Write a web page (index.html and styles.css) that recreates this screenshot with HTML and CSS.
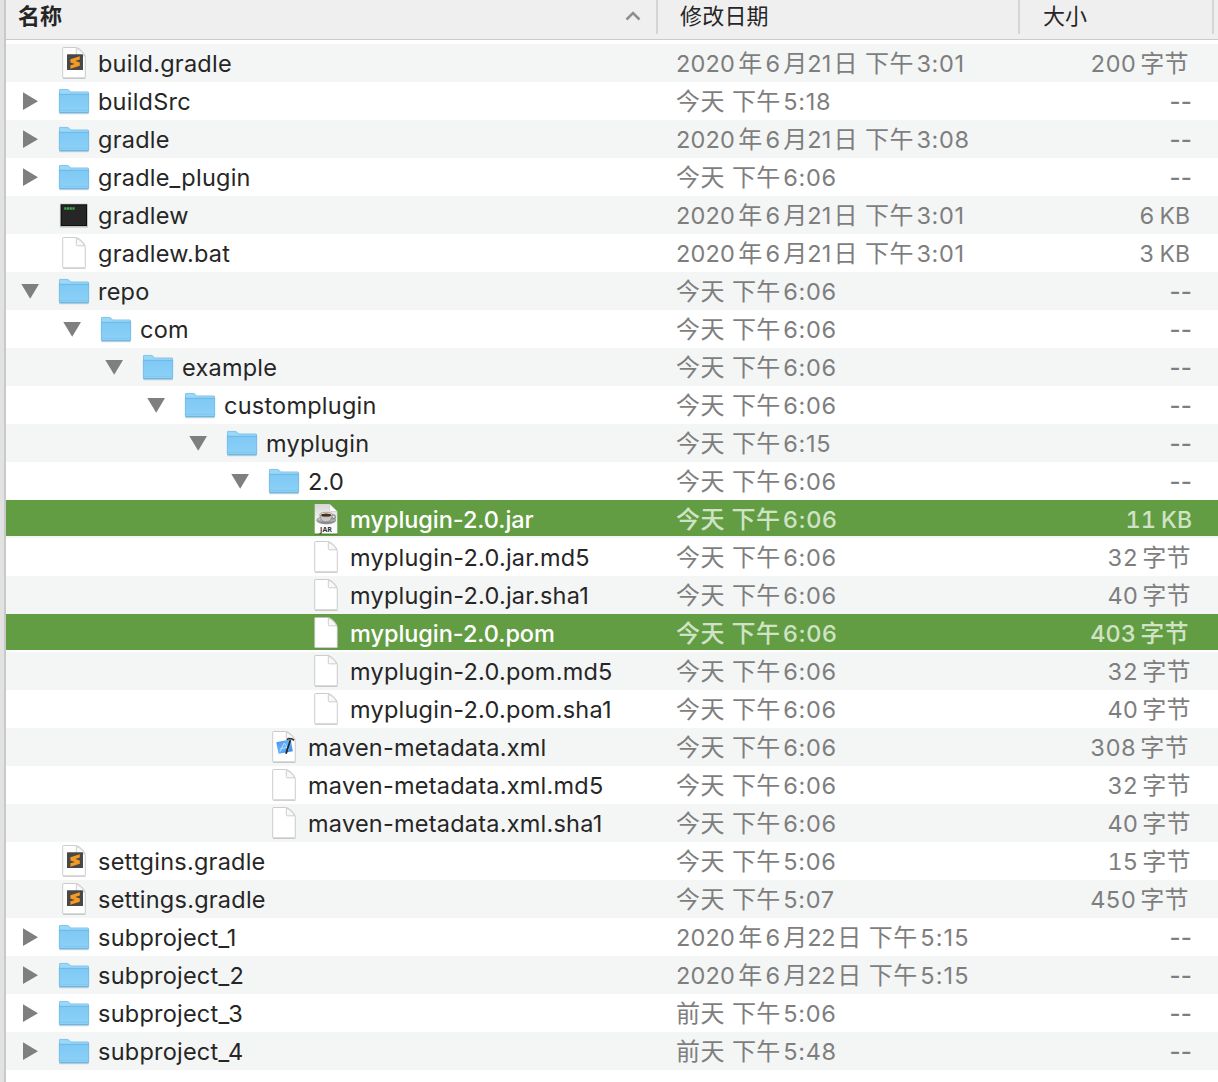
FILE: index.html
```html
<!DOCTYPE html>
<html lang="zh-CN">
<head>
<meta charset="utf-8">
<title>Finder</title>
<link rel="stylesheet" href="styles.css">
</head>
<body>
<svg class="defs" width="0" height="0" aria-hidden="true">
  <defs>
    <linearGradient id="front" x1="0" y1="0" x2="0" y2="1"><stop offset="0" stop-color="#7ec9f4"/><stop offset="1" stop-color="#8dd1f8"/></linearGradient>
    <linearGradient id="saucer" x1="0" y1="0" x2="0" y2="1"><stop offset="0" stop-color="#f4f4f4"/><stop offset="1" stop-color="#777"/></linearGradient>
    <linearGradient id="sheet" x1="0" y1="0" x2="0" y2="1"><stop offset="0" stop-color="#d6d6d6"/><stop offset=".6" stop-color="#f6f6f6"/><stop offset="1" stop-color="#fff"/></linearGradient>
    <linearGradient id="blue" x1="0" y1="0" x2="1" y2="1"><stop offset="0" stop-color="#3f8eea"/><stop offset=".5" stop-color="#69b4fa"/><stop offset="1" stop-color="#2f7fe0"/></linearGradient>
  </defs>
  <symbol id="right" viewBox="0 0 18 38"><path d="M2 10.300v17.700l15-8.800z" fill="#7f7f7f"/></symbol>
  <symbol id="down" viewBox="0 0 18 38"><path d="M.3 12h17.700l-8.800 14.700z" fill="#7f7f7f"/></symbol>
  <symbol id="folder" viewBox="0 0 32 38">
    <path d="M1.5 31.8h29" stroke="#000" stroke-opacity=".14"/>
    <path d="M1 8.2Q1 7 2.2 7h7.2q.8 0 1.3.6l1.3 1.5q.5.6 1.3.6h16.5q1.2 0 1.2 1.2V20H1z" fill="#9ad8fa"/>
    <path d="M1.5 12V8.2q0-.8.8-.8h7.1q.7 0 1.1.5l1.4 1.6q.4.5 1.3.5h16.6q.7 0 .7.8V12" fill="none" stroke="#79bbe0" stroke-width=".7"/>
    <path d="M1 12h30v18.2q0 1-1 1H2q-1 0-1-1z" fill="url(#front)"/>
    <path d="M1 12.3h30" stroke="#67b2e0" stroke-width=".8"/>
    <path d="M1.3 12v18M30.7 12v18" stroke="#6db4df" stroke-width=".6"/>
    <path d="M1.3 28.3h29.4" stroke="#79c2ec" stroke-width=".6"/>
    <path d="M1.4 30.8h29.2" stroke="#62a5cd" stroke-width=".9"/>
  </symbol>
  <symbol id="file" viewBox="0 0 32 38">
    <path d="M5 34.4h22.5" stroke="#000" stroke-opacity=".18"/>
    <path d="M5.4 3.5h12.1c3.6 0 9.8 6 9.8 10v19.7q0 .6-.6.6H5.4q-.7 0-.7-.7V4.2q0-.7.7-.7z" fill="#fff" stroke="#bfbfbf" stroke-width=".8"/>
    <path d="M18.3 4.2v6.600q0 1 1 1h7.400c-1.500-3.200-4.900-6.300-8.400-7.600z" fill="#f8f8f8" stroke="#c4c4c4" stroke-width=".8"/>
  </symbol>
  <symbol id="sublime" viewBox="0 0 32 38">
    <use href="#file" width="32" height="38"/>
    <rect x="9" y="10.300" width="16" height="15.800" rx=".6" fill="#484848"/>
    <path d="M21.800 12.300l-9.400 2.900v3.300l4.500 1.400-4.500 1.400v3.400l9.400-2.900v-3.400l-4.500-1.400 4.500-1.400z" fill="#f79a24"/>
  </symbol>
  <symbol id="exec" viewBox="0 0 32 38">
    <rect x="1.800" y="8.300" width="28.200" height="23.400" rx=".6" fill="#000" fill-opacity=".16"/>
    <rect x="2" y="7.700" width="27.700" height="23" fill="#b8c1c1"/>
    <rect x="2.700" y="8.300" width="26.300" height="21.700" fill="#101010"/>
    <rect x="3.700" y="9.300" width="24.300" height="19.700" fill="#262626"/>
    <path d="M6.300 12.500h10.400" stroke="#43a647" stroke-width="2.400" stroke-dasharray="2.200 .5"/>
  </symbol>
  <symbol id="xml" viewBox="0 0 32 38">
    <use href="#file" width="32" height="38"/>
    <path d="M8.300 14.200l14.500-2.900 2 12-14.300 2.500z" fill="url(#blue)"/>
    <path d="M12 23.500l4.300-8.500 4.300 7M12.500 20.500l8-1.200" fill="none" stroke="#b9defc" stroke-width="1"/>
    <path d="M22.300 12.300l-4.300 13.500" stroke="#252525" stroke-width="1.800"/>
    <path d="M19 11.800l1.300-1.300 3.400.3 2.300 1.400" fill="none" stroke="#333" stroke-width="1.600"/>
  </symbol>
</svg>

<div class="window">
  <header class="head">
    <div class="head-cell head-name"><span>名称</span><svg class="sort" viewBox="0 0 16 10"><path d="M1.500 8.500L8 2l6.500 6.500"/></svg></div>
    <div class="head-cell head-date">修改日期</div>
    <div class="head-cell head-size">大小</div>
  </header>
  <main class="rows">
    <div class="row l0"><div class="name"><svg class="tri"></svg><svg class="icon"><use href="#sublime"/></svg><span>build.gradle</span></div><div class="date"><i>2020</i>年<i>6</i>月<i class="day">21</i>日 下午<i class="time">3:01</i></div><div class="size long"><i>200</i>字节</div></div>
    <div class="row l0"><div class="name"><svg class="tri"><use href="#right"/></svg><svg class="icon"><use href="#folder"/></svg><span>buildSrc</span></div><div class="date">今天 下午<i class="time">5:18</i></div><div class="size none">--</div></div>
    <div class="row l0"><div class="name"><svg class="tri"><use href="#right"/></svg><svg class="icon"><use href="#folder"/></svg><span>gradle</span></div><div class="date"><i>2020</i>年<i>6</i>月<i class="day">21</i>日 下午<i class="time">3:08</i></div><div class="size none">--</div></div>
    <div class="row l0"><div class="name"><svg class="tri"><use href="#right"/></svg><svg class="icon"><use href="#folder"/></svg><span>gradle_plugin</span></div><div class="date">今天 下午<i class="time">6:06</i></div><div class="size none">--</div></div>
    <div class="row l0"><div class="name"><svg class="tri"></svg><svg class="icon"><use href="#exec"/></svg><span>gradlew</span></div><div class="date"><i>2020</i>年<i>6</i>月<i class="day">21</i>日 下午<i class="time">3:01</i></div><div class="size kb"><i>6</i>KB</div></div>
    <div class="row l0"><div class="name"><svg class="tri"></svg><svg class="icon"><use href="#file"/></svg><span>gradlew.bat</span></div><div class="date"><i>2020</i>年<i>6</i>月<i class="day">21</i>日 下午<i class="time">3:01</i></div><div class="size kb"><i>3</i>KB</div></div>
    <div class="row l0"><div class="name"><svg class="tri"><use href="#down"/></svg><svg class="icon"><use href="#folder"/></svg><span>repo</span></div><div class="date">今天 下午<i class="time">6:06</i></div><div class="size none">--</div></div>
    <div class="row l1"><div class="name"><svg class="tri"><use href="#down"/></svg><svg class="icon"><use href="#folder"/></svg><span>com</span></div><div class="date">今天 下午<i class="time">6:06</i></div><div class="size none">--</div></div>
    <div class="row l2"><div class="name"><svg class="tri"><use href="#down"/></svg><svg class="icon"><use href="#folder"/></svg><span>example</span></div><div class="date">今天 下午<i class="time">6:06</i></div><div class="size none">--</div></div>
    <div class="row l3"><div class="name"><svg class="tri"><use href="#down"/></svg><svg class="icon"><use href="#folder"/></svg><span>customplugin</span></div><div class="date">今天 下午<i class="time">6:06</i></div><div class="size none">--</div></div>
    <div class="row l4"><div class="name"><svg class="tri"><use href="#down"/></svg><svg class="icon"><use href="#folder"/></svg><span>myplugin</span></div><div class="date">今天 下午<i class="time">6:15</i></div><div class="size none">--</div></div>
    <div class="row l5"><div class="name"><svg class="tri"><use href="#down"/></svg><svg class="icon"><use href="#folder"/></svg><span>2.0</span></div><div class="date">今天 下午<i class="time">6:06</i></div><div class="size none">--</div></div>
    <div class="row l6 selected">
      <div class="name"><svg class="tri"></svg><svg class="icon" viewBox="0 0 32 38">
        <path d="M4.500 34h23.300" stroke="#000" stroke-opacity=".3"/>
        <path d="M4.700 4h14.800l7.800 7.500v22H4.700z" fill="url(#sheet)"/>
        <path d="M19.500 4v5.500q0 2 2 2h5.800z" fill="#fff" stroke="#bbb" stroke-width=".5"/>
        <ellipse cx="16.200" cy="20.200" rx="9.500" ry="3.600" fill="url(#saucer)" stroke="#777" stroke-width=".7"/>
        <ellipse cx="23" cy="16.900" rx="2.300" ry="2" fill="none" stroke="#888" stroke-width="1.200"/>
        <path d="M10 14.500c0 5 2.500 7.300 6 7.300s6.300-2.300 6.300-7.300z" fill="#c9c9c9" stroke="#777" stroke-width=".6"/>
        <ellipse cx="16.100" cy="14.500" rx="6.300" ry="2.200" fill="#eee" stroke="#777" stroke-width=".6"/>
        <ellipse cx="16.100" cy="14.900" rx="5" ry="1.500" fill="#49300f"/>
        <text x="16" y="32" text-anchor="middle" class="jar-label">JAR</text>
      </svg><span>myplugin-2.0.jar</span></div><div class="date">今天 下午<i class="time">6:06</i></div><div class="size kb wide"><i>11</i>KB</div></div>
    <div class="row l6"><div class="name"><svg class="tri"></svg><svg class="icon"><use href="#file"/></svg><span>myplugin-2.0.jar.md5</span></div><div class="date">今天 下午<i class="time">6:06</i></div><div class="size"><i>32</i>字节</div></div>
    <div class="row l6"><div class="name"><svg class="tri"></svg><svg class="icon"><use href="#file"/></svg><span>myplugin-2.0.jar.sha1</span></div><div class="date">今天 下午<i class="time">6:06</i></div><div class="size"><i>40</i>字节</div></div>
    <div class="row l6 selected"><div class="name"><svg class="tri"></svg><svg class="icon"><use href="#file"/></svg><span>myplugin-2.0.pom</span></div><div class="date">今天 下午<i class="time">6:06</i></div><div class="size long"><i>403</i>字节</div></div>
    <div class="row l6"><div class="name"><svg class="tri"></svg><svg class="icon"><use href="#file"/></svg><span>myplugin-2.0.pom.md5</span></div><div class="date">今天 下午<i class="time">6:06</i></div><div class="size"><i>32</i>字节</div></div>
    <div class="row l6"><div class="name"><svg class="tri"></svg><svg class="icon"><use href="#file"/></svg><span>myplugin-2.0.pom.sha1</span></div><div class="date">今天 下午<i class="time">6:06</i></div><div class="size"><i>40</i>字节</div></div>
    <div class="row l5"><div class="name"><svg class="tri"></svg><svg class="icon"><use href="#xml"/></svg><span>maven-metadata.xml</span></div><div class="date">今天 下午<i class="time">6:06</i></div><div class="size long"><i>308</i>字节</div></div>
    <div class="row l5"><div class="name"><svg class="tri"></svg><svg class="icon"><use href="#file"/></svg><span>maven-metadata.xml.md5</span></div><div class="date">今天 下午<i class="time">6:06</i></div><div class="size"><i>32</i>字节</div></div>
    <div class="row l5"><div class="name"><svg class="tri"></svg><svg class="icon"><use href="#file"/></svg><span>maven-metadata.xml.sha1</span></div><div class="date">今天 下午<i class="time">6:06</i></div><div class="size"><i>40</i>字节</div></div>
    <div class="row l0"><div class="name"><svg class="tri"></svg><svg class="icon"><use href="#sublime"/></svg><span>settgins.gradle</span></div><div class="date">今天 下午<i class="time">5:06</i></div><div class="size"><i>15</i>字节</div></div>
    <div class="row l0"><div class="name"><svg class="tri"></svg><svg class="icon"><use href="#sublime"/></svg><span>settings.gradle</span></div><div class="date">今天 下午<i class="time">5:07</i></div><div class="size long"><i>450</i>字节</div></div>
    <div class="row l0"><div class="name"><svg class="tri"><use href="#right"/></svg><svg class="icon"><use href="#folder"/></svg><span>subproject_1</span></div><div class="date"><i>2020</i>年<i>6</i>月<i class="day tight">22</i>日 下午<i class="time">5:15</i></div><div class="size none">--</div></div>
    <div class="row l0"><div class="name"><svg class="tri"><use href="#right"/></svg><svg class="icon"><use href="#folder"/></svg><span>subproject_2</span></div><div class="date"><i>2020</i>年<i>6</i>月<i class="day tight">22</i>日 下午<i class="time">5:15</i></div><div class="size none">--</div></div>
    <div class="row l0"><div class="name"><svg class="tri"><use href="#right"/></svg><svg class="icon"><use href="#folder"/></svg><span>subproject_3</span></div><div class="date">前天 下午<i class="time">5:06</i></div><div class="size none">--</div></div>
    <div class="row l0"><div class="name"><svg class="tri"><use href="#right"/></svg><svg class="icon"><use href="#folder"/></svg><span>subproject_4</span></div><div class="date">前天 下午<i class="time">5:48</i></div><div class="size none">--</div></div>
  </main>
</div>
</body>
</html>
```
FILE: styles.css
```css
* { box-sizing: border-box; }

body {
  margin: 0;
  background: #fff;
  color: #262626;
  font-family: Inter, "Noto Sans CJK SC", sans-serif;
  font-size: 23.5px;
  overflow: hidden;
}

.defs { display: block; height: 0; }

.window {
  height: 1082px;
  border-left: 2px solid #c9c9c9;
  margin-left: 4px;
  box-shadow: -4px 0 0 #e2e2e2;
}

.head {
  display: flex;
  height: 40px;
  background: #efefef;
  border-bottom: 1px solid #cacaca;
  font-size: 22px;
  line-height: 32px;
}

.head-cell {
  height: 34px;
  border-right: 2px solid #d5d5d5;
  white-space: nowrap;
}

.head-name {
  display: flex;
  justify-content: space-between;
  align-items: center;
  width: 652px;
  padding: 0 15px 0 12px;
  font-weight: 600;
}

.head-name span { height: 34px; }
.head-date { width: 362px; padding-left: 22px; letter-spacing: .2px; }
.head-size { width: 194px; padding-left: 23px; }

.sort {
  width: 16px;
  height: 10px;
  margin-bottom: 2px;
  fill: none;
  stroke: #8e8e8e;
  stroke-width: 2.500;
}

.rows { padding-top: 4px; }

.row {
  display: grid;
  grid-template-columns: 670px 342px 174px;
  height: 38px;
  line-height: 38px;
  white-space: pre;
}

.row:nth-child(odd) { background: #f4f5f5; }

.name { display: flex; letter-spacing: .23px; }
.name span { padding-top: 1px; }
.l0 .name { padding-left: 15px; }
.l1 .name { padding-left: 57px; }
.l2 .name { padding-left: 99px; }
.l3 .name { padding-left: 141px; }
.l4 .name { padding-left: 183px; }
.l5 .name { padding-left: 225px; }
.l6 .name { padding-left: 267px; }

.tri { width: 18px; height: 38px; margin-right: 19px; }
.icon { width: 32px; height: 38px; margin-right: 8px; }

.date, .size {
  height: 38px;
  padding-top: 1px;
  color: #7e7e7e;
  font-size: 24px;
  letter-spacing: .4px;
}

.size { padding-right: 1px; text-align: right; }
.size.long { padding-right: 3px; }
.size.none { padding-right: 0; font-weight: 500; letter-spacing: .2px; }

i {
  margin: 0 3px;
  font-size: 23.5px;
  font-style: normal;
  letter-spacing: .2px;
}

i:first-child:not(:last-child) { margin-left: 0; }
.date i.day { margin: 0 2px 0 -.5px; }
.date i.tight { margin-right: 2px; letter-spacing: -.3px; }
.date i.time { margin: 0 0 0 2.500px; letter-spacing: .7px; }
.date i.tight + .time { letter-spacing: 1.200px; }

.size i {
  margin: 0 4px 0 0;
  letter-spacing: .1px;
  font-feature-settings: "tnum";
}

.size.kb { padding-right: 2px; font-size: 23px; letter-spacing: 0; }
.kb i { margin-right: 5px; }
.size.wide { padding-right: 0; }

.row.selected {
  background-image: linear-gradient(#629d43, #629d43);
  background-size: 100% 36px;
  background-repeat: no-repeat;
}

.selected .name { color: #fff; font-weight: 500; letter-spacing: -.05px; }
.selected .date, .selected .size { color: #d1e3c7; font-weight: 500; }

.jar-label {
  font: bold 7px "Open Sans", sans-serif;
  letter-spacing: 0;
  fill: #333;
}
```
